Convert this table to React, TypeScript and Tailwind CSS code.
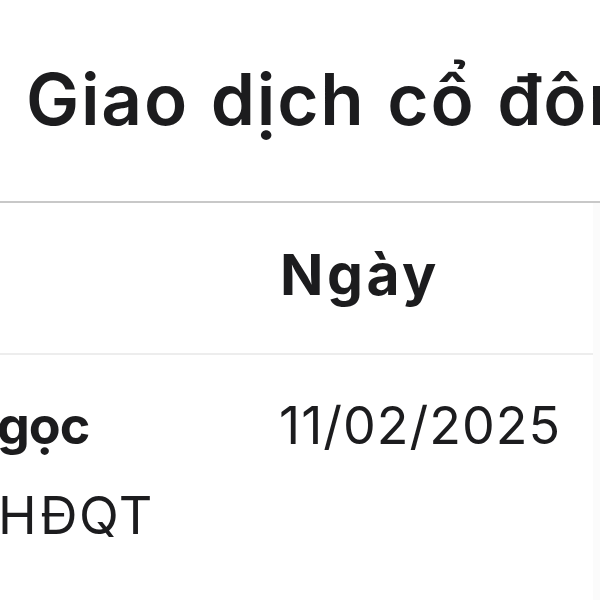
const font = { fontFamily: "Inter, 'Noto Sans', sans-serif" };

export default function App() {
  return (
    <div className="w-[600px] h-[600px] overflow-hidden bg-white text-[#1c1c1e]" style={font}>
      {/* Tiêu đề */}
      <div className="pl-[26px] pt-[64px] pb-[67px]">
        <h1 className="whitespace-nowrap text-[71px] leading-[70px] font-semibold tracking-[1.8px] [word-spacing:2px]">
          Giao dịch cổ đông nội bộ
        </h1>
      </div>

      <div className="border-t-2 border-[#c8c8c8]">
        <div className="flex">
          <div className="w-[593px] shrink-0">
            {/* Header */}
            <div className="flex border-b-2 border-[#ededed]">
              <div className="w-[280px] shrink-0" />
              <div className="pt-[44px] pb-[50px] text-[57px] leading-[56px] font-bold tracking-[3.5px]">Ngày</div>
            </div>

            {/* Row */}
            <div className="flex pt-[45px] h-[245px]">
              <div className="w-[279px] shrink-0 flex flex-col gap-[38px] whitespace-nowrap">
                <span className="text-[52px] leading-[52px] font-bold -ml-[3px] tracking-[-1px]">gọc</span>
                <span className="text-[52px] leading-[52px] -ml-[2px] tracking-[1.5px]">HĐQT</span>
              </div>
              <div className="text-[52px] leading-[52px] whitespace-nowrap tracking-[1px]">11/02/2025</div>
            </div>
          </div>
          <div className="flex-1 bg-[#fbfbfb]" />
        </div>
      </div>
    </div>
  );
}
